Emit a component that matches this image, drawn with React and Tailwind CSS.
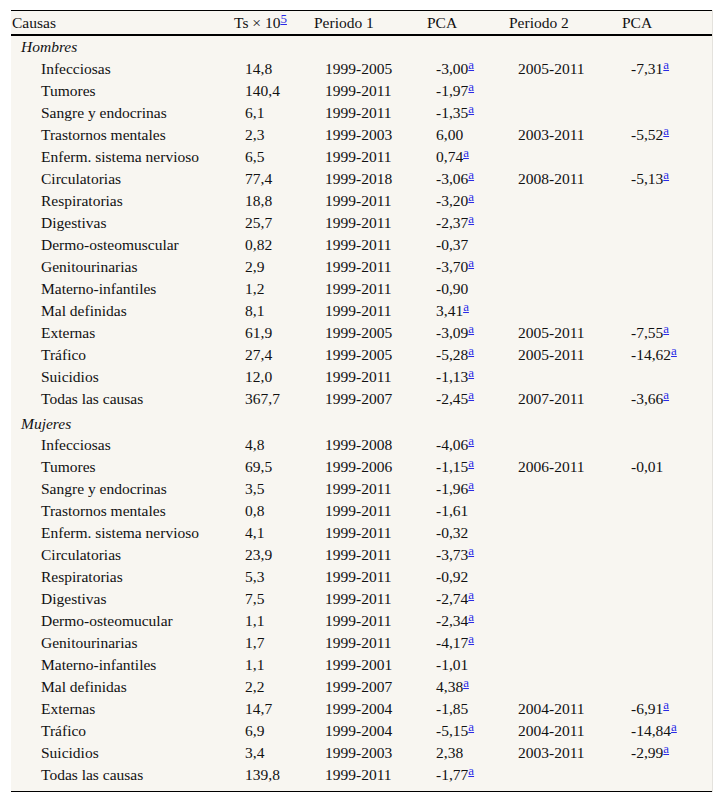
const HOMBRES = [
  ["Infecciosas", "14,8", "1999-2005", "-3,00", true, "2005-2011", "-7,31", true],
  ["Tumores", "140,4", "1999-2011", "-1,97", true],
  ["Sangre y endocrinas", "6,1", "1999-2011", "-1,35", true],
  ["Trastornos mentales", "2,3", "1999-2003", "6,00", false, "2003-2011", "-5,52", true],
  ["Enferm. sistema nervioso", "6,5", "1999-2011", "0,74", true],
  ["Circulatorias", "77,4", "1999-2018", "-3,06", true, "2008-2011", "-5,13", true],
  ["Respiratorias", "18,8", "1999-2011", "-3,20", true],
  ["Digestivas", "25,7", "1999-2011", "-2,37", true],
  ["Dermo-osteomuscular", "0,82", "1999-2011", "-0,37", false],
  ["Genitourinarias", "2,9", "1999-2011", "-3,70", true],
  ["Materno-infantiles", "1,2", "1999-2011", "-0,90", false],
  ["Mal definidas", "8,1", "1999-2011", "3,41", true],
  ["Externas", "61,9", "1999-2005", "-3,09", true, "2005-2011", "-7,55", true],
  ["Tráfico", "27,4", "1999-2005", "-5,28", true, "2005-2011", "-14,62", true],
  ["Suicidios", "12,0", "1999-2011", "-1,13", true],
  ["Todas las causas", "367,7", "1999-2007", "-2,45", true, "2007-2011", "-3,66", true],
];

const MUJERES = [
  ["Infecciosas", "4,8", "1999-2008", "-4,06", true],
  ["Tumores", "69,5", "1999-2006", "-1,15", true, "2006-2011", "-0,01", false],
  ["Sangre y endocrinas", "3,5", "1999-2011", "-1,96", true],
  ["Trastornos mentales", "0,8", "1999-2011", "-1,61", false],
  ["Enferm. sistema nervioso", "4,1", "1999-2011", "-0,32", false],
  ["Circulatorias", "23,9", "1999-2011", "-3,73", true],
  ["Respiratorias", "5,3", "1999-2011", "-0,92", false],
  ["Digestivas", "7,5", "1999-2011", "-2,74", true],
  ["Dermo-osteomucular", "1,1", "1999-2011", "-2,34", true],
  ["Genitourinarias", "1,7", "1999-2011", "-4,17", true],
  ["Materno-infantiles", "1,1", "1999-2001", "-1,01", false],
  ["Mal definidas", "2,2", "1999-2007", "4,38", true],
  ["Externas", "14,7", "1999-2004", "-1,85", false, "2004-2011", "-6,91", true],
  ["Tráfico", "6,9", "1999-2004", "-5,15", true, "2004-2011", "-14,84", true],
  ["Suicidios", "3,4", "1999-2003", "2,38", false, "2003-2011", "-2,99", true],
  ["Todas las causas", "139,8", "1999-2011", "-1,77", true],
];

const GRID = "grid grid-cols-[223px_80px_113px_82px_113px_1fr]";

const Note = ({ children }) => (
  <a href="#" className="text-[#2a2ae6] underline text-[13px] relative top-[-5px]">
    {children}
  </a>
);

const Value = ({ v, sig }) => (
  <span>
    {v}
    {sig && <Note>a</Note>}
  </span>
);

const Row = ({ r }) => (
  <div className={`${GRID} h-[22px] items-center`}>
    <div className="pl-[30px]">{r[0]}</div>
    <div className="pl-[11px]">{r[1]}</div>
    <div className="pl-[11px]">{r[2]}</div>
    <div className="pl-[9px]"><Value v={r[3]} sig={r[4]} /></div>
    <div className="pl-[9px]">{r[5]}</div>
    <div className="pl-[9px]">{r[6] && <Value v={r[6]} sig={r[7]} />}</div>
  </div>
);

export default function App() {
  return (
    <div className="bg-white w-[723px] h-[803px] pt-[10px] pl-[11px]" style={{ fontFamily: '"Liberation Serif", "Times New Roman", serif' }}>
      <div className="w-[702px] bg-[#f8f6f1] border-r border-[#e4e2dd] text-[15.5px] text-[#111] leading-none">
        <div className={`${GRID} h-[26px] pt-[1px] items-center border-t border-black border-b-2 border-b-black`}>
          <div className="pl-[1px]">Causas</div>
          <div>Ts × 10<Note>5</Note></div>
          <div>Periodo 1</div>
          <div>PCA</div>
          <div>Periodo 2</div>
          <div>PCA</div>
        </div>
        <div className="h-[22px] flex items-center pl-[10px] italic">Hombres</div>
        {HOMBRES.map((r, i) => <Row key={i} r={r} />)}
        <div className="h-[24px] flex items-center pt-[3px] pl-[10px] italic">Mujeres</div>
        {MUJERES.map((r, i) => <Row key={i} r={r} />)}
        <div className="h-[6px] border-b border-black" />
      </div>
    </div>
  );
}
